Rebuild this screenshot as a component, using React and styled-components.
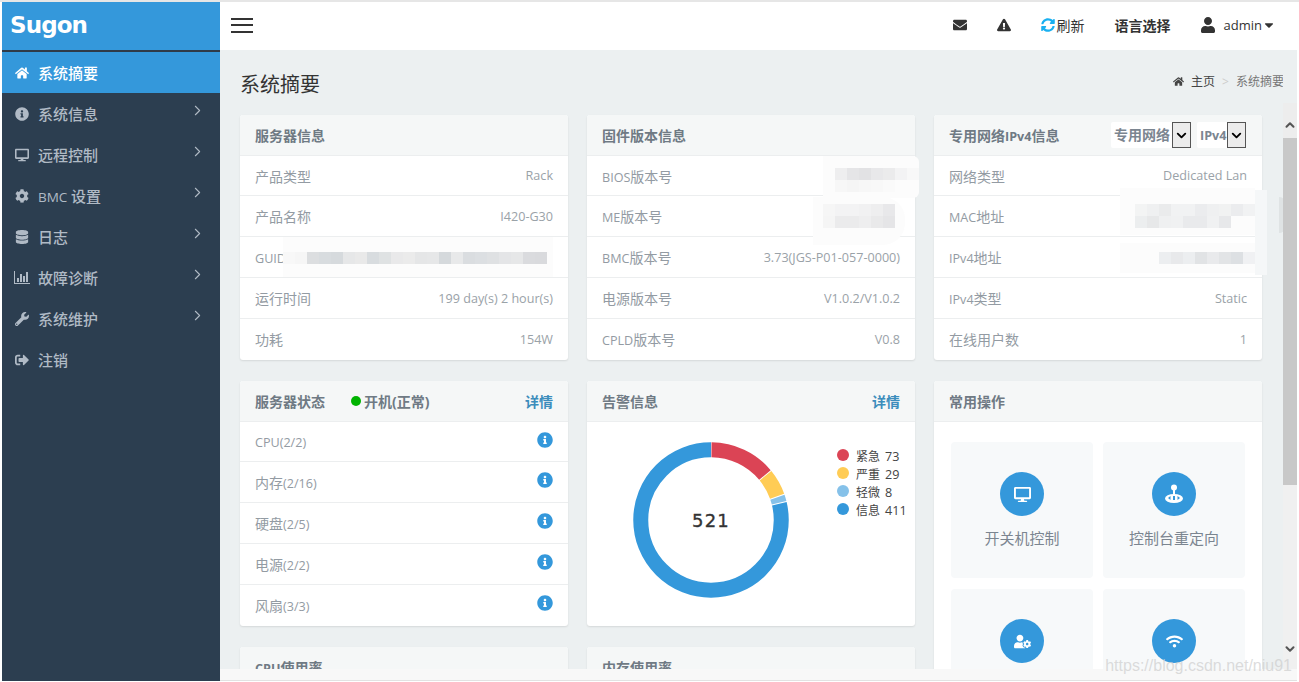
import React from 'react';
import styled, { createGlobalStyle } from 'styled-components';
import {
  FaHome, FaInfoCircle, FaDesktop, FaCog, FaDatabase, FaWrench, FaSignOutAlt,
  FaEnvelope, FaExclamationTriangle, FaSyncAlt, FaUser, FaCaretDown, FaUserCog, FaWifi,
} from 'react-icons/fa';
import { ChevronRight, ChevronDown, ChevronUp } from 'lucide-react';

const SANS = '"Open Sans", "Noto Sans CJK SC", "Noto Sans", sans-serif';

const GlobalStyle = createGlobalStyle`
  html, body {
    margin: 0;
    height: 100%;
    overflow: hidden;
    background: #fff;
    font-family: ${SANS};
  }
  * { box-sizing: border-box; }
`;

const Page = styled.div`
  display: flex;
  width: 1299px;
  height: 682px;
  padding: 2px 2px 1px;
  position: relative;
  background: #fff;
  &::before {
    content: '';
    position: absolute;
    top: 0;
    left: 0;
    right: 0;
    height: 2px;
    background: #e6e6e6;
  }
`;

const Sidebar = styled.aside`
  width: 218px;
  flex-shrink: 0;
  background: #2c3e50;
  display: flex;
  flex-direction: column;
`;

const Brand = styled.div`
  height: 50px;
  background: #3498db;
  border-bottom: 2px solid #2f3b48;
  display: flex;
  align-items: center;
  padding: 0 0 3px 8px;
  color: #fff;
  font-family: "DejaVu Sans", sans-serif;
  font-weight: 700;
  font-size: 23px;
  letter-spacing: -0.9px;
`;

const NavItem = styled.div`
  height: 41px;
  display: flex;
  align-items: center;
  padding: 0 14px 0 12px;
  gap: 8px;
  font-size: 15px;
  font-weight: 500;
  color: ${p => (p.$active ? '#fff' : '#b0bac5')};
  background: ${p => (p.$active ? '#3498db' : 'transparent')};
  &:first-of-type { height: 40px; }
`;

const NavIcon = styled.span`
  width: 16px;
  display: flex;
  justify-content: center;
  font-size: 14px;
`;

const NavArrow = styled(ChevronRight)`
  margin-left: auto;
  margin-top: -6px;
  color: #b0bac5;
`;

const Latin = styled.span`
  font-size: 0.9em;
`;

const Main = styled.div`
  flex: 1;
  min-width: 0;
  display: flex;
  flex-direction: column;
  position: relative;
`;

const Header = styled.header`
  height: 48px;
  flex-shrink: 0;
  background: #fff;
  display: flex;
  align-items: center;
  padding: 0 21px 2px 11px;
  color: #333;
`;

const Burger = styled.div`
  width: 22px;
  margin-right: auto;
  display: flex;
  flex-direction: column;
  gap: 4.5px;
  span {
    height: 2px;
    background: #333;
  }
`;

const HeaderIcon = styled.span`
  display: flex;
  font-size: ${p => p.$size || 14}px;
  margin-left: ${p => p.$gap || 0}px;
  color: ${p => p.$color || '#333'};
`;

const HeaderText = styled.span`
  font-size: ${p => p.$size || 14}px;
  margin-left: ${p => p.$gap}px;
  font-weight: ${p => p.$weight || 400};
  color: #333;
`;

const Body = styled.div`
  flex: 1;
  min-height: 0;
  display: flex;
  background: #ecf0f1;
`;

const Content = styled.div`
  flex: 1;
  min-width: 0;
  padding: 0 21px 0 20px;
  overflow: hidden;
`;

const TitleBar = styled.div`
  height: 65px;
  display: flex;
  align-items: center;
  justify-content: space-between;
  padding-top: 2px;
`;

const PageTitle = styled.h1`
  margin: 0;
  font-size: 20px;
  font-weight: 400;
  color: #333;
`;

const Crumbs = styled.div`
  display: flex;
  align-items: center;
  font-size: 12px;
  color: #444;
  margin-right: -22px;
  margin-top: -5px;
`;

const CrumbSep = styled.span`
  color: #ccc;
  margin: 0 7px;
`;

const CrumbNow = styled.span`
  color: #777;
`;

const CrumbHome = styled(FaHome)`
  font-size: 11px;
  margin-right: 7px;
`;

const Grid = styled.div`
  display: grid;
  grid-template-columns: repeat(3, 328px);
  grid-auto-rows: 245px;
  column-gap: 19px;
  row-gap: 21px;
`;

const Card = styled.section`
  position: relative;
  background: #fff;
  border-radius: 3px;
  box-shadow: 0 1px 2px rgba(0, 0, 0, 0.1);
  display: flex;
  flex-direction: column;
  grid-row: ${p => (p.$tall ? 'span 2' : 'auto')};
`;

const CardHead = styled.div`
  height: 41px;
  flex-shrink: 0;
  display: flex;
  align-items: center;
  padding: 0 15px;
  background: #f5f7f7;
  border-bottom: 1px solid #eceeef;
  border-radius: 3px 3px 0 0;
`;

const CardTitle = styled.span`
  font-size: 14px;
  font-weight: 700;
  color: #6f7a84;
`;

const Status = styled.span`
  display: flex;
  align-items: center;
  gap: 3px;
  margin-left: 26px;
  font-size: 14px;
  font-weight: 700;
  color: #6f7a84;
`;

const StatusDot = styled.i`
  width: 10px;
  height: 10px;
  border-radius: 50%;
  background: #00b300;
`;

const Detail = styled.span`
  margin-left: auto;
  font-size: 14px;
  font-weight: 700;
  color: #3c8dbc;
`;

const Selects = styled.div`
  margin-left: auto;
  margin-right: 1px;
  display: flex;
  gap: 6px;
`;

const SelectBox = styled.div`
  height: 26px;
  width: ${p => p.$w}px;
  display: flex;
  align-items: stretch;
  justify-content: space-between;
  background: #fff;
  border-radius: 2px;
  font-size: 14px;
  font-weight: 700;
  color: #7b8590;
  padding-left: 3px;
  span {
    line-height: 25px;
  }
`;

const SelectArrow = styled.div`
  width: 19px;
  flex-shrink: 0;
  display: flex;
  align-items: center;
  justify-content: center;
  background: #ececec;
  border: 1px solid #555;
  color: #000;
`;

const Row = styled.div`
  height: 41px;
  flex-shrink: 0;
  display: flex;
  align-items: center;
  justify-content: space-between;
  padding: 0 15px;
  border-bottom: 1px solid #eceeef;
  font-size: 14px;
  color: #939ba3;
  ${CardHead} + & {
    height: 40px;
  }
  &:last-of-type {
    border-bottom: 0;
    padding-bottom: 1px;
  }
`;

const RowValue = styled.span`
  font-size: 12.6px;
  color: #9aa2a8;
`;

const RowInfo = styled(FaInfoCircle)`
  font-size: 16px;
  color: #3498db;
  margin-top: -4px;
`;

/* the screenshot has blurred out serial numbers, these sit on top of the rows */
const Smudge = styled.aside`
  position: absolute;
  left: ${p => p.$x}px;
  top: ${p => p.$y}px;
  width: ${p => p.$w}px;
  height: ${p => p.$h}px;
  padding: ${p => p.$pad};
  background: #fcfcfc;
  border-radius: ${p => p.$round || '0'};
  display: grid;
  grid-template-columns: repeat(auto-fill, 12px);
  grid-auto-rows: 12px;
  align-content: start;
`;

const Cell = styled.i`
  background: ${p => p.$c};
`;

const Pale = styled.aside`
  position: absolute;
  left: ${p => p.$x}px;
  top: ${p => p.$y}px;
  width: ${p => p.$w}px;
  height: ${p => p.$h}px;
  background: ${p => p.$c};
  border-radius: ${p => p.$round || '0'};
`;

const ChartBody = styled.div`
  flex: 1;
  display: flex;
  align-items: flex-start;
  padding: 20px 0 0 46px;
`;

const Legend = styled.ul`
  list-style: none;
  margin: 4px 0 0 48px;
  padding: 0;
`;

const LegendItem = styled.li`
  height: 18px;
  display: flex;
  align-items: center;
  gap: 7px;
  font-size: 12px;
  color: #444;
  white-space: nowrap;
`;

const LegendNum = styled.span`
  font-size: 12.6px;
  margin-left: 5px;
`;

const LegendLabel = styled.span`
  padding-top: 1px;
`;

const LegendDot = styled.i`
  width: 12px;
  height: 12px;
  border-radius: 50%;
  background: ${p => p.$c};
  flex-shrink: 0;
`;

const Tiles = styled.div`
  display: grid;
  grid-template-columns: repeat(2, 142px);
  grid-auto-rows: 136px;
  column-gap: 10px;
  row-gap: 11px;
  padding: 20px 0 0 17px;
`;

const Tile = styled.div`
  background: #f7f9fa;
  border-radius: 4px;
  display: flex;
  flex-direction: column;
  align-items: center;
  padding-top: 30px;
  font-size: 15px;
  color: #7b8590;
`;

const TileCircle = styled.div`
  width: 44px;
  height: 44px;
  border-radius: 50%;
  background: #3498db;
  color: #fff;
  display: flex;
  align-items: center;
  justify-content: center;
  font-size: 17px;
  margin-bottom: 11px;
  flex-shrink: 0;
`;

const ScrollBar = styled.div`
  width: 14px;
  flex-shrink: 0;
  margin-top: 53px;
  background: #f0f0f0;
  display: flex;
  flex-direction: column;
  align-items: center;
  color: #555;
`;

const ScrollUp = styled.div`
  height: 35px;
  width: 100%;
  background: #ededed;
  display: flex;
  justify-content: center;
  padding-top: 15px;
`;

const ScrollThumb = styled.div`
  height: 347px;
  width: 100%;
  background: #c8c8c8;
`;

const ScrollDown = styled.div`
  margin-top: auto;
  padding-bottom: 13px;
  display: flex;
`;

const Strip = styled.div`
  height: 12px;
  flex-shrink: 0;
  background: #f8f8f8;
  border-bottom: 1px solid #e2e2e2;
`;

const Watermark = styled.div`
  position: absolute;
  right: 5px;
  bottom: 6px;
  font-family: "Liberation Sans", sans-serif;
  font-size: 16px;
  color: rgba(205, 205, 205, 0.7);
`;

// ascii runs in the original font are a bit smaller than the cjk around them
const Mixed = ({ text }) => text.split(/([\x20-\x7e]+)/).map((part, i) => (
  i % 2 ? <Latin key={i}>{part}</Latin> : part
));

const ChartIcon = () => (
  <svg width="16" height="13" viewBox="0 0 16 13" fill="currentColor">
    <rect x="0" y="0" width="1" height="13" />
    <rect x="0" y="12" width="16" height="1" />
    <rect x="3" y="7" width="2" height="4" />
    <rect x="6" y="3" width="2" height="8" />
    <rect x="9" y="5" width="2" height="6" />
    <rect x="12" y="1" width="2" height="10" />
  </svg>
);

const NAV = [
  { icon: <FaHome />, label: '系统摘要', active: true },
  { icon: <FaInfoCircle />, label: '系统信息', arrow: true },
  { icon: <FaDesktop />, label: '远程控制', arrow: true },
  { icon: <FaCog />, label: 'BMC 设置', arrow: true },
  { icon: <FaDatabase />, label: '日志', arrow: true },
  { icon: <ChartIcon />, label: '故障诊断', arrow: true },
  { icon: <FaWrench />, label: '系统维护', arrow: true },
  { icon: <FaSignOutAlt />, label: '注销' },
];

const SERVER = [['产品类型', 'Rack'], ['产品名称', 'I420-G30'], ['GUID', ''], ['运行时间', '199 day(s) 2 hour(s)'], ['功耗', '154W']];
const FIRMWARE = [['BIOS版本号', ''], ['ME版本号', ''], ['BMC版本号', '3.73(JGS-P01-057-0000)'], ['电源版本号', 'V1.0.2/V1.0.2'], ['CPLD版本号', 'V0.8']];
const NETWORK = [['网络类型', 'Dedicated Lan'], ['MAC地址', ''], ['IPv4地址', ''], ['IPv4类型', 'Static'], ['在线用户数', '1']];
const HEALTH = ['CPU(2/2)', '内存(2/16)', '硬盘(2/5)', '电源(2/2)', '风扇(3/3)'];

const ALARMS = [
  { name: '紧急', value: 73, color: '#db4455' },
  { name: '严重', value: 29, color: '#ffcc55' },
  { name: '轻微', value: 8, color: '#85c1e9' },
  { name: '信息', value: 411, color: '#3498db' },
];

const GUID_CELLS = ['#f8f8f8', '#f6f6f6', '#dcdee0', '#d8dcdf', '#d6dadd', '#e6e7e8', '#e9e9e9', '#d8dcdf', '#dfe2e3', '#e9e9ea', '#ebebeb', '#e5e6e7', '#e6e7e8', '#d5d9dc', '#e8e9ea', '#dadde0', '#dcdfe2', '#dfe1e3', '#e4e5e7', '#e6e7e8', '#dadbde', '#d9dadd'];
const BIOS_CELLS = ['#eeeeef', '#e5e5e7', '#e2e2e4', '#e8e8ea', '#ebebec', '#f3f3f4', '#f8f8f8', '#f7f7f7', '#f5f5f5', '#f7f7f7', '#f8f8f8', '#fafafa'];
const ME_CELLS = ['#f6f6f6', '#f3f3f4', '#f3f3f4', '#f1f1f2', '#eeeeef', '#e8e8ea', '#f5f5f5', '#ebebec', '#ebebec', '#eeeeef', '#e9e9ea', '#e5e5e7'];
const MAC_CELLS = ['#f3f4f4', '#eff0f1', '#eaebec', '#f1f2f3', '#f1f2f3', '#ebecee', '#eff0f1', '#f1f2f2', '#ebecee', '#f1f2f3', '#eceeef', '#e7e8e9', '#eff0f1', '#f0f1f2', '#e9eaec', '#e9eaec', '#f0f1f2', '#e7e8ea'];
const IP_CELLS = ['#eceef0', '#e8e9eb', '#eceef0', '#e1e3e5', '#e9eaec', '#e2e4e6', '#dde0e3', '#f0f1f3'];

const Donut = () => {
  const r = 70.25;
  const c = 2 * Math.PI * r;
  const total = ALARMS.reduce((sum, a) => sum + a.value, 0);
  let used = 0;
  return (
    <svg width="156" height="156" viewBox="0 0 156 156">
      <g transform="rotate(-90 78 78)">
        {ALARMS.map(a => {
          const len = (a.value / total) * c;
          const seg = (
            <circle
              key={a.name}
              cx="78"
              cy="78"
              r={r}
              fill="none"
              stroke={a.color}
              strokeWidth="15"
              strokeDasharray={`${len - 1} ${c - len + 1}`}
              strokeDashoffset={-used - 0.5}
            />
          );
          used += len;
          return seg;
        })}
      </g>
      <text x="78" y="85" textAnchor="middle" fontFamily="DejaVu Sans, sans-serif" fontSize="18" letterSpacing="1.2" fill="#333" stroke="#333" strokeWidth="0.35">
        {total}
      </text>
    </svg>
  );
};

const JoystickIcon = () => (
  <svg width="22" height="22" viewBox="0 0 22 22" fill="currentColor">
    <circle cx="11" cy="4.5" r="3" />
    <rect x="10" y="6" width="2" height="7" />
    <ellipse cx="11" cy="15.5" rx="9" ry="4.5" />
    <path d="M5 15l2.5-2v4zM17 15l-2.5-2v4z" fill="#3498db" />
    <rect x="10" y="13" width="2" height="4" fill="#3498db" />
  </svg>
);

const InfoRows = ({ rows }) => rows.map(([label, value]) => (
  <Row key={label}>
    <span><Mixed text={label} /></span>
    <RowValue>{value}</RowValue>
  </Row>
));

const Mosaic = ({ cells, ...rest }) => (
  <Smudge {...rest}>
    {cells.map((c, i) => <Cell key={i} $c={c} />)}
  </Smudge>
);

const Select = ({ text, width }) => (
  <SelectBox $w={width}>
    <span><Mixed text={text} /></span>
    <SelectArrow><ChevronDown size={15} strokeWidth={3} /></SelectArrow>
  </SelectBox>
);

const App = () => (
  <Page>
    <GlobalStyle />
    <Sidebar>
      <Brand>Sugon</Brand>
      {NAV.map(item => (
        <NavItem key={item.label} $active={item.active}>
          <NavIcon>{item.icon}</NavIcon>
          <span><Mixed text={item.label} /></span>
          {item.arrow && <NavArrow size={17} strokeWidth={1.5} />}
        </NavItem>
      ))}
    </Sidebar>
    <Main>
      <Header>
        <Burger><span /><span /><span /></Burger>
        <HeaderIcon><FaEnvelope /></HeaderIcon>
        <HeaderIcon $gap={30}><FaExclamationTriangle /></HeaderIcon>
        <HeaderIcon $gap={30} $color="#1ab0f0"><FaSyncAlt /></HeaderIcon>
        <HeaderText $gap={2}>刷新</HeaderText>
        <HeaderText $gap={30} $weight={700}>语言选择</HeaderText>
        <HeaderIcon $gap={29} $size={16}><FaUser /></HeaderIcon>
        <HeaderText $gap={8} $size={13}>admin</HeaderText>
        <HeaderIcon><FaCaretDown /></HeaderIcon>
      </Header>
      <Body>
        <Content>
          <TitleBar>
            <PageTitle>系统摘要</PageTitle>
            <Crumbs>
              <CrumbHome />主页<CrumbSep>&gt;</CrumbSep><CrumbNow>系统摘要</CrumbNow>
            </Crumbs>
          </TitleBar>
          <Grid>
            <Card>
              <CardHead><CardTitle>服务器信息</CardTitle></CardHead>
              <InfoRows rows={SERVER} />
              <Mosaic cells={GUID_CELLS} $x={43} $y={122} $w={270} $h={40} $pad="15px 0 0 0" />
            </Card>
            <Card>
              <CardHead><CardTitle>固件版本信息</CardTitle></CardHead>
              <InfoRows rows={FIRMWARE} />
              <Mosaic cells={BIOS_CELLS} $x={236} $y={41} $w={96} $h={42} $pad="12px 0 0 12px" $round="0 6px 6px 0" />
              <Mosaic cells={ME_CELLS} $x={226} $y={82} $w={92} $h={48} $pad="7px 0 0 10px" $round="0 22px 22px 0" />
            </Card>
            <Card>
              <CardHead>
                <CardTitle><Mixed text="专用网络IPv4信息" /></CardTitle>
                <Selects>
                  <Select text="专用网络" width={80} />
                  <Select text="IPv4" width={49} />
                </Selects>
              </CardHead>
              <InfoRows rows={NETWORK} />
              <Mosaic cells={MAC_CELLS} $x={186} $y={73} $w={135} $h={47} $pad="16px 0 0 15px" />
              <Mosaic cells={IP_CELLS} $x={186} $y={128} $w={135} $h={30} $pad="9px 0 0 39px" />
              <Pale $x={321} $y={75} $w={12} $h={85} $c="#f5f7f8" />
              <Pale $x={345} $y={82} $w={7} $h={36} $c="#dfe3e4" $round="0 18px 18px 0" />
            </Card>
            <Card>
              <CardHead>
                <CardTitle>服务器状态</CardTitle>
                <Status><StatusDot />开机(正常)</Status>
                <Detail>详情</Detail>
              </CardHead>
              {HEALTH.map(label => (
                <Row key={label}>
                  <span><Mixed text={label} /></span>
                  <RowInfo />
                </Row>
              ))}
            </Card>
            <Card>
              <CardHead>
                <CardTitle>告警信息</CardTitle>
                <Detail>详情</Detail>
              </CardHead>
              <ChartBody>
                <Donut />
                <Legend>
                  {ALARMS.map(a => (
                    <LegendItem key={a.name}>
                      <LegendDot $c={a.color} />
                      <LegendLabel>{a.name}<LegendNum>{a.value}</LegendNum></LegendLabel>
                    </LegendItem>
                  ))}
                </Legend>
              </ChartBody>
            </Card>
            <Card $tall>
              <CardHead><CardTitle>常用操作</CardTitle></CardHead>
              <Tiles>
                <Tile><TileCircle><FaDesktop /></TileCircle>开关机控制</Tile>
                <Tile><TileCircle><JoystickIcon /></TileCircle>控制台重定向</Tile>
                <Tile><TileCircle><FaUserCog /></TileCircle></Tile>
                <Tile><TileCircle><FaWifi /></TileCircle></Tile>
              </Tiles>
            </Card>
            <Card>
              <CardHead><CardTitle><Mixed text="CPU使用率" /></CardTitle></CardHead>
            </Card>
            <Card>
              <CardHead><CardTitle>内存使用率</CardTitle></CardHead>
            </Card>
          </Grid>
        </Content>
        <ScrollBar>
          <ScrollUp><ChevronUp size={14} strokeWidth={3.5} /></ScrollUp>
          <ScrollThumb />
          <ScrollDown><ChevronDown size={14} strokeWidth={3.5} /></ScrollDown>
        </ScrollBar>
      </Body>
      <Strip />
      <Watermark>https://blog.csdn.net/niu91</Watermark>
    </Main>
  </Page>
);

export default App;
